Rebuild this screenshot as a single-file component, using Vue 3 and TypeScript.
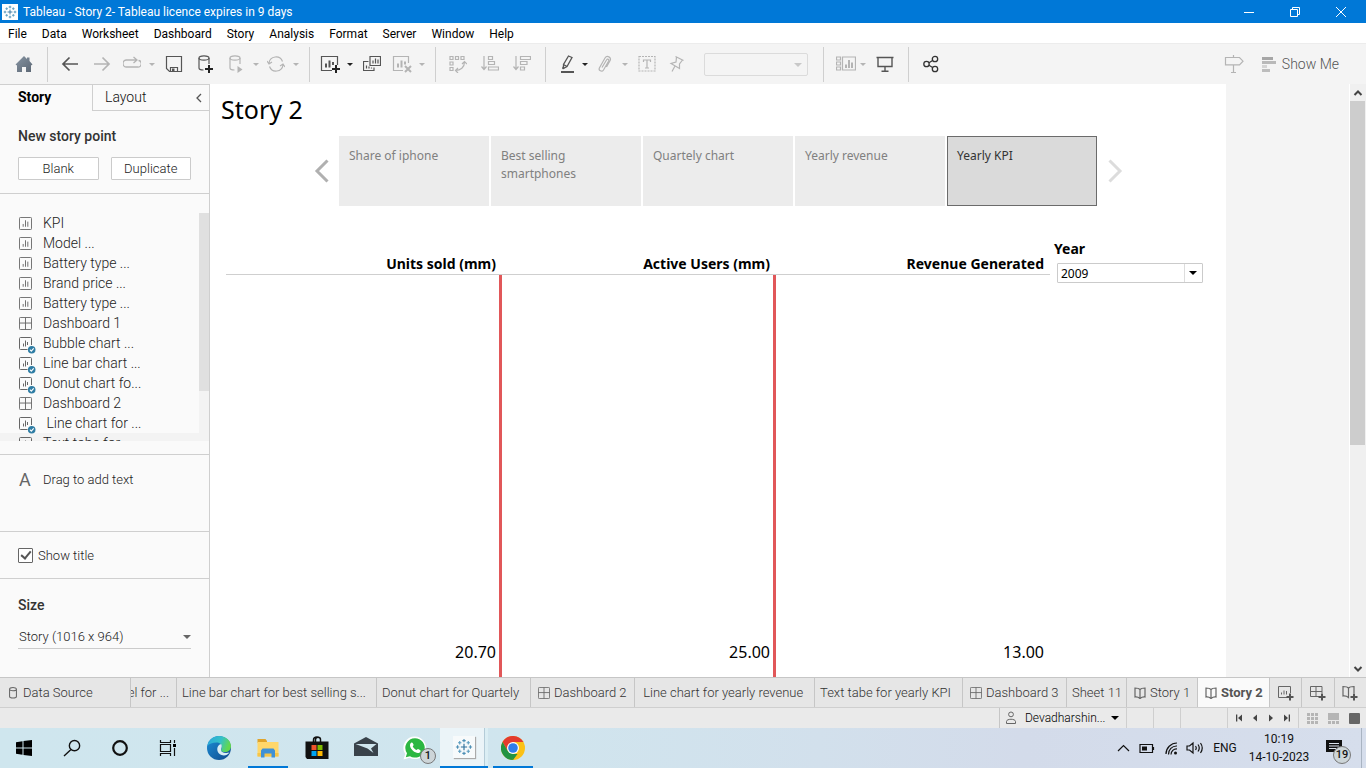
<script setup lang="ts">
import { ref } from 'vue'

interface SheetItem {
  icon: 'sheet' | 'dash' | 'used'
  label: string
}
interface Tab {
  icon?: string
  label: string
  width: number
  active?: boolean
  clipped?: boolean
}
interface Tool {
  icon: string
  name: string
  slot: 'wide' | 'mid' | 'slim'
  off?: boolean
  caret?: boolean
}

const menus = ['File', 'Data', 'Worksheet', 'Dashboard', 'Story', 'Analysis', 'Format', 'Server', 'Window', 'Help']

const toolGroups: Tool[][] = [
  [
    { icon: 'back', name: 'Undo', slot: 'wide' },
    { icon: 'forward', name: 'Redo', slot: 'wide', off: true },
    { icon: 'replay', name: 'Replay', slot: 'mid', off: true, caret: true },
    { icon: 'save', name: 'Save', slot: 'wide' },
    { icon: 'dbadd', name: 'New data source', slot: 'wide' },
    { icon: 'dbplay', name: 'Pause auto updates', slot: 'mid', off: true, caret: true },
    { icon: 'refresh', name: 'Run update', slot: 'mid', off: true, caret: true },
  ],
  [
    { icon: 'newsheet', name: 'New worksheet', slot: 'mid', caret: true },
    { icon: 'copysheet', name: 'Duplicate', slot: 'wide' },
    { icon: 'clearsheet', name: 'Clear sheet', slot: 'mid', off: true, caret: true },
  ],
  [
    { icon: 'swap', name: 'Swap rows and columns', slot: 'wide', off: true },
    { icon: 'sortasc', name: 'Sort ascending', slot: 'wide', off: true },
    { icon: 'sortdesc', name: 'Sort descending', slot: 'wide', off: true },
  ],
]
const markTools: Tool[] = [
  { icon: 'pen', name: 'Highlight', slot: 'slim', caret: true },
  { icon: 'clip', name: 'Group members', slot: 'mid', off: true, caret: true },
  { icon: 'text', name: 'Show mark labels', slot: 'wide', off: true },
  { icon: 'pin', name: 'Fix axes', slot: 'mid', off: true },
]
const viewTools: Tool[] = [
  { icon: 'cards', name: 'Show/hide cards', slot: 'slim', off: true, caret: true },
  { icon: 'present', name: 'Presentation mode', slot: 'wide' },
]

const sheets: SheetItem[] = [
  { icon: 'sheet', label: 'KPI' },
  { icon: 'sheet', label: 'Model ...' },
  { icon: 'sheet', label: 'Battery type ...' },
  { icon: 'sheet', label: 'Brand price ...' },
  { icon: 'sheet', label: 'Battery type ...' },
  { icon: 'dash', label: 'Dashboard 1' },
  { icon: 'used', label: 'Bubble chart ...' },
  { icon: 'used', label: 'Line bar chart ...' },
  { icon: 'used', label: 'Donut chart fo...' },
  { icon: 'dash', label: 'Dashboard 2' },
  { icon: 'used', label: '\u00a0Line chart for ...' },
  { icon: 'used', label: 'Text tabe for ...' },
]

const points = ['Share of iphone', 'Best selling smartphones', 'Quartely chart', 'Yearly revenue', 'Yearly KPI']
const current = ref(4)

const columns = [
  { title: 'Units sold (mm)', value: '20.70' },
  { title: 'Active Users (mm)', value: '25.00' },
  { title: 'Revenue Generated', value: '13.00' },
]

const tabs: Tab[] = [
  { icon: 'cyl', label: 'Data Source', width: 131 },
  { label: 'el for ...', width: 46, clipped: true },
  { label: 'Line bar chart for best selling s...', width: 200 },
  { label: 'Donut chart for Quartely', width: 154 },
  { icon: 'dash', label: 'Dashboard 2', width: 104 },
  { label: '\u00a0Line chart for yearly revenue', width: 180 },
  { label: 'Text tabe for yearly KPI', width: 148 },
  { icon: 'dash', label: 'Dashboard 3', width: 104 },
  { label: 'Sheet 11', width: 60 },
  { icon: 'book', label: 'Story 1', width: 71 },
  { icon: 'book', label: 'Story 2', width: 72, active: true },
]

const year = ref('2009')
const size = ref('Story (1016 x 964)')
const showTitle = ref(true)
</script>

<template>
  <svg class="defs" aria-hidden="true">
    <defs>
      <linearGradient id="edgeA" x1="0" y1="0" x2="1" y2="0.3">
        <stop offset="0" stop-color="#2aa5dc" /><stop offset="0.6" stop-color="#35c1c8" /><stop offset="1" stop-color="#62d84e" />
      </linearGradient>
      <linearGradient id="edgeB" x1="0" y1="0" x2="1" y2="1">
        <stop offset="0" stop-color="#1b8fd8" /><stop offset="1" stop-color="#114a8b" />
      </linearGradient>
      <linearGradient id="homeG" x1="0" y1="0" x2="1" y2="1">
        <stop offset="0" stop-color="#8795a3" /><stop offset="1" stop-color="#5b6673" />
      </linearGradient>
    </defs>
    <symbol id="i-logo" viewBox="0 0 16 16">
      <g fill="none" stroke-width="1">
        <path stroke="#2c6e9b" d="M8 5.2v5.6M5.2 8h5.6" />
        <path stroke="#4d8fb5" d="M8 0.8v3M6.5 2.3h3M8 12.2v3M6.5 13.7h3M0.8 8h3M2.3 6.500v3M12.2 8h3M13.700 6.500v3" />
        <path stroke="#5c9dc0" d="M4.200 2.700v3M2.700 4.200h3M11.800 2.700v3M10.300 4.200h3M4.200 10.300v3M2.700 11.800h3M11.800 10.300v3M10.300 11.800h3" />
      </g>
    </symbol>
    <symbol id="i-home" viewBox="0 0 18 18"><path fill="url(#homeG)" d="M9 1 0.500 9.500 2 10.500V17h5v-5h4v5h5v-6.500l1.500-1L14.500 6V2.500H12V4z" /></symbol>
    <symbol id="i-back" viewBox="0 0 18 18"><path fill="none" stroke="currentColor" stroke-width="1.700" d="M17 9H2M8.500 2.500 2 9l6.500 6.500" /></symbol>
    <symbol id="i-forward" viewBox="0 0 18 18"><path fill="none" stroke="currentColor" stroke-width="1.700" d="M1 9h15M9.500 2.500 16 9l-6.500 6.500" /></symbol>
    <symbol id="i-replay" viewBox="0 0 18 18"><path fill="none" stroke="currentColor" stroke-width="1.300" d="M8.500 5H3.500a3 3 0 0 0 0 7h11a3 3 0 0 0 1-6.500M5 5h8M10.500 2l3.500 3-3.500 3" /></symbol>
    <symbol id="i-save" viewBox="0 0 18 18"><path fill="none" stroke="currentColor" stroke-width="1.200" d="M1.500 1.500h15v15h-12l-3-3zM5.500 16.500v-4h7v4" /><path fill="currentColor" d="M7 13.500h2.500V17H7z" /></symbol>
    <symbol id="i-dbadd" viewBox="0 0 18 18">
      <path fill="none" stroke="currentColor" stroke-width="1.200" d="M2 3v10c0 1.200 2 2 4.500 2M12 3v6" /><ellipse cx="7" cy="3" rx="5" ry="2.200" fill="none" stroke="currentColor" stroke-width="1.200" />
      <path stroke="#222" stroke-width="2" d="M12 10v8M8 14h8" />
    </symbol>
    <symbol id="i-dbplay" viewBox="0 0 18 18">
      <path fill="none" stroke="currentColor" stroke-width="1.200" d="M3 3v10c0 1.200 2 2 4.500 2M13 3v6" /><ellipse cx="8" cy="3" rx="5" ry="2.200" fill="none" stroke="currentColor" stroke-width="1.200" />
      <path fill="currentColor" d="M10.500 11l5 3.500-5 3.500z" />
    </symbol>
    <symbol id="i-refresh" viewBox="0 0 18 18"><path fill="none" stroke="currentColor" stroke-width="1.200" d="M2 8a7 7 0 0 1 13.500-1.500M16 10a7 7 0 0 1-13.500 1.500M0 6l2 3 3-2M18 12l-2-3-3 2" /></symbol>
    <symbol id="i-newsheet" viewBox="0 0 20 18">
      <path fill="none" stroke="currentColor" stroke-width="1.200" d="M17.500 10V1.500h-16v14H12" />
      <path stroke="currentColor" stroke-width="2" d="M6 12.500v-4M9.500 12.500v-7M13 10v-3" /><path stroke="#222" stroke-width="2" d="M16 10v8M12 14h8" />
    </symbol>
    <symbol id="i-copysheet" viewBox="0 0 18 18">
      <path fill="none" stroke="currentColor" stroke-width="1.200" d="M7 1.500h10.500v9H7zM5.500 6.500h-5v9h10.500v-3" />
      <path stroke="currentColor" stroke-width="1.200" d="M10 8.500v-3M12.500 8.500v-5M15 8.500v-4M3.500 13.500v-3M6 13.500v-2M8.500 13.500v-1" />
    </symbol>
    <symbol id="i-clearsheet" viewBox="0 0 20 18">
      <path fill="none" stroke="currentColor" stroke-width="1.200" d="M16.500 8V1.500h-15v14H11" />
      <path stroke="currentColor" stroke-width="2" d="M6 12.500v-4M9.500 12.500v-7M13 9.500v-3M13 11l6 6M19 11l-6 6" />
    </symbol>
    <symbol id="i-swap" viewBox="0 0 18 18"><path fill="none" stroke="currentColor" stroke-width="1.200" d="M1 1.500h3v3H1zM6.500 1.500h3v3h-3zM12 1.500h3v3h-3zM1 7h3v3H1zM1 12.500h3v3H1zM6.500 15.500c5 0 9-3 9-8.500M13 9l2.500-2.500L18 9M9 13l-2.500 2.500L9 18" /></symbol>
    <symbol id="i-sortasc" viewBox="0 0 18 18"><path fill="none" stroke="currentColor" stroke-width="1.200" d="M3 1v13M0.500 11.500 3 14.500l2.500-3M7.500 1.500h4v3h-4zM7.500 6.500h6v3h-6zM7.500 12h10v3h-10z" /></symbol>
    <symbol id="i-sortdesc" viewBox="0 0 18 18"><path fill="none" stroke="currentColor" stroke-width="1.200" d="M3 1v13M0.500 11.500 3 14.500l2.500-3M7.500 1.500h10v3h-10zM7.500 6.500h6.500v3H7.500zM7.500 12h4v3h-4z" /></symbol>
    <symbol id="i-pen" viewBox="0 0 18 18"><path fill="none" stroke="currentColor" stroke-width="1.300" d="M9.500 1 13 2.500 8 11.500 4.500 13.500V9.500zM4.500 9.500 8 11.500" /><path fill="currentColor" d="M3.500 11.500 6 13l-3 1zM2 16h13v2H2z" /></symbol>
    <symbol id="i-clip" viewBox="0 0 18 18"><path fill="none" stroke="currentColor" stroke-width="1.200" d="M6 12.500 10.500 5c1-1.800 3-.7 2 1.200L7.500 15c-1.600 2.500-5.500.5-4-2.300L9 3c2-3.200 6.800-.8 5 2.800L10.500 12" /></symbol>
    <symbol id="i-text" viewBox="0 0 18 18"><path fill="none" stroke="currentColor" stroke-width="1.200" stroke-dasharray="2 1" d="M1 1.500h16v14.500H1z" /><path fill="none" stroke="currentColor" stroke-width="1.200" d="M5.500 7V5h7v2M9 5v8M7 13h4" /></symbol>
    <symbol id="i-pin" viewBox="0 0 18 18"><path fill="none" stroke="currentColor" stroke-width="1.200" d="M7.500 1.500 15.500 5.500M8.500 2 8 7 3 8.500 11.500 13.500 11.500 9 14.500 5M7 11 4 16.500" /></symbol>
    <symbol id="i-cards" viewBox="0 0 20 18"><path fill="none" stroke="currentColor" stroke-width="1.200" d="M.5 2h4v3h-4zM.5 7h4v3h-4zM.5 12h4v3h-4zM6.500 2h13v13h-13z" /><path stroke="currentColor" stroke-width="2" d="M10 13V9.500M13 13V5M16 13V7.500" /></symbol>
    <symbol id="i-present" viewBox="0 0 18 18"><path fill="none" stroke="currentColor" stroke-width="1.400" d="M0.500 2.500h17M2 2.500V11.500h14V2.500M9 11.500V16M5.500 16.300h7" /></symbol>
    <symbol id="i-share" viewBox="0 0 18 18"><g fill="none" stroke="currentColor" stroke-width="1.300"><circle cx="4.500" cy="9" r="2.700" /><circle cx="13" cy="4" r="2.700" /><circle cx="13" cy="14" r="2.700" /><path d="M7 7.700l3.600-2.200M7 10.300l3.600 2.200" /></g></symbol>
    <symbol id="i-sign" viewBox="0 0 20 18"><path fill="none" stroke="currentColor" stroke-width="1.200" d="M1.500 2.500h14l3.500 3.700-3.500 3.700h-14zM9.500 0v2.500M9.500 10v7.500M7 17.500h5" /></symbol>
    <symbol id="i-sheet" viewBox="0 0 14 14"><path fill="none" stroke="#666" d="M1.500.5h11a1 1 0 0 1 1 1v11a1 1 0 0 1-1 1h-11a1 1 0 0 1-1-1v-11a1 1 0 0 1 1-1zM4.500 10.500v-3M7 10.500V3.500M9.500 10.500V5" /></symbol>
    <symbol id="i-used" viewBox="0 0 17 17">
      <path fill="none" stroke="#666" d="M8.500 12.500h-7a1 1 0 0 1-1-1v-10a1 1 0 0 1 1-1h10a1 1 0 0 1 1 1v6.500M4.500 9.500v-3M6.500 9.500V3.500M8.500 8V5" />
      <circle cx="12.700" cy="12.700" r="3.800" fill="#2f7da4" /><path fill="none" stroke="#fff" stroke-width="1.100" d="M10.900 12.700l1.400 1.400 2.400-2.800" />
    </symbol>
    <symbol id="i-dash" viewBox="0 0 14 14"><path fill="none" stroke="#666" d="M1.500.5h11a1 1 0 0 1 1 1v11a1 1 0 0 1-1 1h-11a1 1 0 0 1-1-1v-11a1 1 0 0 1 1-1zM7 .5v13M.5 6.500h13" /></symbol>
    <symbol id="i-cyl" viewBox="0 0 14 14"><path fill="none" stroke="#666" stroke-width="1.200" d="M3 2.500v8.500c0 2.500 8 2.500 8 0V2.500c0-2.500-8-2.500-8 0 0 2.500 8 2.500 8 0" /></symbol>
    <symbol id="i-book" viewBox="0 0 12 12"><path fill="none" stroke="#666" stroke-width="1.200" d="M6 2.500v9C4.500 10.200 2.500 9.800 1 10V1c2 0 4 .3 5 1.500C7 1.300 9 1 11 1v9c-1.500-.2-3.500.2-5 1.500" /></symbol>
    <symbol id="i-tabsheet" viewBox="0 0 16 16"><path fill="none" stroke="#666" d="M9 12.500H.5V1.500h12V8M3.500 9.500v-2M6 9.500v-4M8.500 9.500V6" /><path stroke="#555" stroke-width="2" d="M12 8.500v7M8.500 12h7" /></symbol>
    <symbol id="i-tabdash" viewBox="0 0 16 16"><path fill="none" stroke="#666" d="M9 11.500H.5V1.500h11.500V8M6 1.500v10M.5 6.500H12" /><path stroke="#555" stroke-width="2" d="M12 8.500v7M8.500 12h7" /></symbol>
    <symbol id="i-tabbook" viewBox="0 0 16 16"><path fill="none" stroke="#666" stroke-width="1.200" d="M6.500 3v9.500C5 11.200 3 10.800 1 11V1.500c2 0 4.500.3 5.500 1.500C7.500 1.800 10 1.500 12 1.500V8" /><path stroke="#555" stroke-width="2" d="M12 8.500v7M8.500 12h7" /></symbol>
  </svg>

  <div class="screen">
    <header class="titlebar">
      <span class="applogo"><svg><use href="#i-logo" /></svg></span>
      <span class="apptitle">Tableau - Story 2- Tableau licence expires in 9 days</span>
      <button class="winbtn" aria-label="Minimize"><svg viewBox="0 0 12 12"><path d="M1 6.500h10" /></svg></button>
      <button class="winbtn" aria-label="Restore"><svg viewBox="0 0 12 12"><path d="M1.500 3.500h7v7h-7zM3.500 3.500v-2h7v7h-2" /></svg></button>
      <button class="winbtn" aria-label="Close"><svg viewBox="0 0 12 12"><path d="M1 1l10 10M11 1L1 11" /></svg></button>
    </header>

    <nav class="menubar">
      <button v-for="m in menus" :key="m">{{ m }}</button>
    </nav>

    <div class="toolbar">
      <button class="home" aria-label="Home"><svg><use href="#i-home" /></svg></button>
      <div v-for="(g, i) in toolGroups" :key="i" class="group">
        <template v-for="t in g" :key="t.icon">
          <button class="tool" :class="[t.slot, t.icon, { off: t.off }]" :aria-label="t.name"><svg><use :href="'#i-' + t.icon" /></svg></button>
          <button v-if="t.caret" class="caret" :class="{ off: t.off }" :aria-label="t.name + ' options'"></button>
        </template>
      </div>
      <div class="group marks">
        <template v-for="t in markTools" :key="t.icon">
          <button class="tool" :class="[t.slot, { off: t.off }]" :aria-label="t.name"><svg><use :href="'#i-' + t.icon" /></svg></button>
          <button v-if="t.caret" class="caret" :class="{ off: t.off }" :aria-label="t.name + ' options'"></button>
        </template>
        <div class="fit"><select aria-label="Fit" disabled></select></div>
      </div>
      <div class="group view">
        <template v-for="t in viewTools" :key="t.icon">
          <button class="tool" :class="[t.slot, t.icon, { off: t.off }]" :aria-label="t.name"><svg><use :href="'#i-' + t.icon" /></svg></button>
          <button v-if="t.caret" class="caret" :class="{ off: t.off }" :aria-label="t.name + ' options'"></button>
        </template>
      </div>
      <div class="group"><button class="tool wide share" aria-label="Share"><svg><use href="#i-share" /></svg></button></div>
      <button class="tool wide off guide" aria-label="Data guide"><svg><use href="#i-sign" /></svg></button>
      <button class="showme">
        <svg viewBox="0 0 14 16"><path fill="#a6a6a6" d="M0 1h11v3H0z" /><path fill="#b9b9b9" d="M0 5h14v3H0z" /><path fill="#d4d4d4" d="M0 9h5v3H0z" /><path fill="#bdbdbd" d="M0 13h8v3H0z" /></svg>
        Show Me
      </button>
    </div>

    <main class="work">
      <aside class="side">
        <div class="panes">
          <button class="pane on">Story</button>
          <button class="pane">Layout</button>
          <button class="collapse" aria-label="Collapse"><svg viewBox="0 0 8 10"><path d="M6 1 2 5l4 4" /></svg></button>
        </div>
        <section class="newpoint">
          <h2>New story point</h2>
          <div class="pair"><button>Blank</button><button>Duplicate</button></div>
        </section>
        <section class="sheets">
          <ul>
            <li v-for="(s, i) in sheets" :key="i"><svg :class="'mark-' + s.icon"><use :href="'#i-' + s.icon" /></svg><span>{{ s.label }}</span></li>
          </ul>
          <div class="track"><i></i></div>
        </section>
        <section class="addtext"><b>A</b><span>Drag to add text</span></section>
        <section class="showtitle">
          <label><input v-model="showTitle" type="checkbox" /><span>Show title</span></label>
        </section>
        <section class="size">
          <h2 id="size-h">Size</h2>
          <div class="sizebox"><select v-model="size" aria-labelledby="size-h"><option>Story (1016 x 964)</option></select></div>
        </section>
      </aside>

      <div class="canvas">
        <article class="story">
          <h1>Story 2</h1>
          <nav class="points">
            <button class="arrow" aria-label="Previous" @click="current = Math.max(0, current - 1)"><svg viewBox="0 0 16 26"><path d="M13.500 2.500 3 13l10.500 10.500" /></svg></button>
            <button v-for="(p, i) in points" :key="p" class="point" :class="{ on: i === current }" @click="current = i">{{ p }}</button>
            <button class="arrow next" aria-label="Next" @click="current = Math.min(4, current + 1)"><svg viewBox="0 0 16 26"><path d="M2.500 2.500 13 13 2.500 23.500" /></svg></button>
          </nav>
          <div class="board">
            <table>
              <thead><tr><th v-for="c in columns" :key="c.title">{{ c.title }}</th></tr></thead>
              <tbody><tr><td v-for="c in columns" :key="c.title">{{ c.value }}</td></tr></tbody>
            </table>
            <div class="filter">
              <label for="year">Year</label>
              <div class="yearbox"><select id="year" v-model="year"><option>2009</option></select></div>
            </div>
          </div>
        </article>
      </div>
      <div class="vscroll">
        <button aria-label="Scroll up"><svg viewBox="0 0 10 8"><path d="M1.500 6 5 2.500 8.500 6" /></svg></button>
        <i></i>
        <button class="down" aria-label="Scroll down"><svg viewBox="0 0 10 8"><path d="M1.500 2 5 5.500 8.500 2" /></svg></button>
      </div>
    </main>

    <nav class="tabs">
      <button v-for="t in tabs" :key="t.label" class="tab" :class="{ active: t.active, clipped: t.clipped, iconic: t.icon }" :style="{ width: t.width + 'px' }">
        <svg v-if="t.icon"><use :href="'#i-' + t.icon" /></svg><span>{{ t.label }}</span>
      </button>
      <button class="tab add" aria-label="New worksheet"><svg><use href="#i-tabsheet" /></svg></button>
      <button class="tab add" aria-label="New dashboard"><svg><use href="#i-tabdash" /></svg></button>
      <button class="tab add" aria-label="New story"><svg><use href="#i-tabbook" /></svg></button>
    </nav>

    <div class="status">
      <button class="user">
        <svg viewBox="0 0 12 14"><path d="M6 1a2.300 2.300 0 1 1 0 4.800A2.300 2.300 0 0 1 6 1zM1.500 12.500V10.500c0-3 9-3 9 0v2z" /></svg>
        <span>Devadharshin...</span><i></i>
      </button>
      <span class="cell"></span><span class="cell"></span><span class="cell last"></span>
      <div class="pager">
        <button aria-label="First"><svg viewBox="0 0 8 8"><path d="M1 .5h1.300v7H1zM7 .5v7L3 4z" /></svg></button>
        <button aria-label="Previous tab"><svg viewBox="0 0 8 8"><path d="M6 .5v7L2 4z" /></svg></button>
        <button aria-label="Next tab"><svg viewBox="0 0 8 8"><path d="M2 .5v7L6 4z" /></svg></button>
        <button aria-label="Last"><svg viewBox="0 0 8 8"><path d="M5.700 .5H7v7H5.700zM1 .5v7L5 4z" /></svg></button>
      </div>
      <div class="modes">
        <button aria-label="Show sheet sorter"><svg viewBox="0 0 11 11"><path fill="#b5b5b5" d="M0 0h3v3H0zM4 0h3v3H4zM8 0h3v3H8zM0 4h3v3H0zM4 4h3v3H4zM8 4h3v3H8zM0 8h3v3H0zM4 8h3v3H4zM8 8h3v3H8z" /></svg></button>
        <button aria-label="Show filmstrip"><svg viewBox="0 0 11 11"><path fill="#b5b5b5" d="M0 0h11v7H0zM0 8h3v3H0zM4 8h3v3H4zM8 8h3v3H8z" /></svg></button>
        <button aria-label="Show tabs"><svg viewBox="0 0 11 11"><rect width="11" height="11" rx="1" fill="#666" /></svg></button>
      </div>
    </div>

    <footer class="taskbar">
      <button class="sys" aria-label="Start"><svg viewBox="0 0 24 24"><path d="M4 6.200 10.500 5.300v6.200H4zM11.500 5.100 20 4v7.500h-8.500zM4 12.500h6.500v6.200L4 17.800zM11.500 12.500H20V20l-8.500-1.100z" /></svg></button>
      <button class="sys" aria-label="Search"><svg viewBox="0 0 24 24"><path fill="none" stroke="#111" stroke-width="1.400" d="M14.500 4.500a5 5 0 1 1 0 10.300 5 5 0 0 1 0-10.300zM11 13.500 4 20" /></svg></button>
      <button class="sys" aria-label="Cortana"><svg viewBox="0 0 24 24"><circle cx="12" cy="12" r="6.800" fill="none" stroke="#111" stroke-width="2.200" /></svg></button>
      <button class="sys" aria-label="Task view"><svg viewBox="0 0 24 24"><path fill="none" stroke="#111" stroke-width="1.200" d="M4.500 4v2.500h10V4M4.500 8.500h10v7h-10zM4.500 20v-2.500h10V20M18.500 4v3M18.500 12v8" /><path d="M17 8h3v3h-3z" /></svg></button>
      <button class="app first" aria-label="Edge"><svg viewBox="0 0 24 24"><circle cx="12" cy="12" r="12" fill="url(#edgeB)" /><path fill="url(#edgeA)" d="M.3 10C1.500 4 6.300 0 12 0c7.500 0 12 5.500 12 10 0 4-3 6-6 6-2.300 0-4-.8-4-1.800 0-.8 1-1.200 1-3C15 8.500 12.500 6.500 9.500 6.500 5.500 6.500 2 8 .3 10z" /><path fill="#d8edf4" d="M14.500 8.500c.8 2.800-.5 4-.5 5.700 0 1.800 3 3.500 8.500 2.300-2 2.600-5 3.500-8 2.500-4.500-1.500-5.500-7-2.500-10 .8-.8 1.800-1 2.500-.5z" /></svg></button>
      <button class="app open" aria-label="File Explorer"><svg viewBox="0 0 24 24"><path fill="#e0a42b" d="M1.500 3h8l1.500 2v2h-9.500z" /><path fill="#ffd76a" d="M1.500 6h21v14.500h-21z" /><path fill="#f6c548" d="M1.500 17h21v3.500h-21z" /><path fill="#3f91d6" d="M5 14.500l1.500-2h11l1.500 2v7h-3.500v-4h-7v4H5z" /></svg></button>
      <button class="app" aria-label="Store"><svg viewBox="0 0 24 24"><path fill="none" stroke="#111" stroke-width="1.500" d="M8.500 6V4c0-4 7-4 7 0v2M10.500 6V3.500c0-3 5-3 5 0" /><path fill="#111" d="M.5 5.500h23V23H2L.5 21z" /><path fill="#f0532a" d="M6.500 9h5v5h-5z" /><path fill="#7fba00" d="M12.500 9h5v5h-5z" /><path fill="#00a4ef" d="M6.500 15h5v5h-5z" /><path fill="#ffb900" d="M12.500 15h5v5h-5z" /></svg></button>
      <button class="app" aria-label="Mail"><svg viewBox="0 0 24 24"><path fill="#39424a" d="M0 7.500 12 1l12 6.500v12.500H0z" /><path fill="#d0e6ee" d="M1.500 8h21L17 12.500l2.500 4.500L13.500 12.500z" /></svg></button>
      <button class="app wa" aria-label="WhatsApp">
        <svg viewBox="0 0 24 24"><path fill="#fff" d="M12 .5A11.300 11.300 0 1 1 6.500 21.800L.5 23.500 2.200 18A11.400 11.400 0 0 1 12 .5z" /><path fill="#2cb742" d="M12 2.200A9.700 9.700 0 1 1 7 20.200L2.800 21.300 4 17.200A9.700 9.700 0 0 1 12 2.200z" /><path fill="#fff" d="M8.500 6.500c-3 2-1 6 1.500 8.300 2.500 2.200 6 3.400 7.500.7.600-1.200-.5-1.500-2-2.300-1.200-.6-1.300.9-2 .8-1.300-.3-3.300-2.200-3.700-3.500-.1-.5 1-1 .8-1.700-.6-1.500-.9-2.500-2.100-2.300z" /></svg>
        <span class="count">1</span>
      </button>
      <button class="app current" aria-label="Tableau"><span class="tile"><svg><use href="#i-logo" /></svg></span></button>
      <button class="app open chrome" aria-label="Chrome"><svg viewBox="0 0 24 24"><circle cx="12" cy="12" r="12" fill="#fbc116" /><path fill="#e33b2e" d="M1.600 6A12 12 0 0 1 22.400 6H12L6.800 15z" /><path fill="#229342" d="M1.600 6 6.800 15l3 3.500L12 24A12 12 0 0 1 1.600 6z" /><path fill="#229342" d="M6.800 15 12 18h4.500L12 24z" /><circle cx="12" cy="12" r="6" fill="#fff" /><circle cx="12" cy="12" r="4.800" fill="#2f7de9" /></svg></button>
      <div class="tray">
        <button aria-label="Hidden icons"><svg viewBox="0 0 16 16"><path d="M3 11l5.500-5.500L14 11" /></svg></button>
        <button aria-label="Battery"><svg viewBox="0 0 16 16"><path d="M1 4.500h12.500v8H1zM14.500 7v3" /><path class="solid" d="M3 6.500h5v4H3z" /></svg></button>
        <button aria-label="Network"><svg viewBox="0 0 16 16"><path d="M3 14A11 11 0 0 1 14 3M5.500 14.500A8 8 0 0 1 14 6M8 14.500A5.500 5.500 0 0 1 14 9" /><circle class="solid" cx="12.500" cy="13" r="1.500" /></svg></button>
        <button class="vol" aria-label="Volume"><svg viewBox="0 0 18 16"><path d="M1 6h2.500L7 3v10l-3.500-3H1zM9.500 6q1.500 2 0 4M12 4.500q2.500 3.500 0 7M14.500 3q3.500 5 0 10" /></svg></button>
        <button class="lang">ENG</button>
        <button class="clock"><span>10:19</span><span>14-10-2023</span></button>
        <button class="note" aria-label="Notifications"><svg viewBox="0 0 18 18"><path class="solid" d="M1 1h16v12h-4l-3 3v-3H1z" /><path stroke="#dbe2ec" d="M4 4.500h10M4 7h10M4 9.500h7" /></svg><span class="count">19</span></button>
        <button class="desk" aria-label="Show desktop"></button>
      </div>
    </footer>
  </div>
</template>

<style>
html,
body {
  margin: 0;
  height: 100%;
  overflow: hidden;
}
</style>

<style scoped>
* {
  box-sizing: border-box;
}
button,
select {
  font: inherit;
  color: inherit;
  background: none;
  border: 0;
  padding: 0;
  margin: 0;
  border-radius: 0;
}
select {
  appearance: none;
}
svg {
  display: block;
  flex: none;
}
.defs {
  position: absolute;
  width: 0;
  height: 0;
}
.screen {
  display: flex;
  flex-direction: column;
  height: 100vh;
  overflow: hidden;
  font-family: Roboto, 'Open Sans', sans-serif;
  font-size: 13px;
  font-weight: 300;
  color: #222;
  background: #fff;
}

/* window chrome */
.titlebar {
  display: flex;
  align-items: center;
  flex: none;
  height: 23px;
  background: #0078d7;
  color: #fff;
  font-size: 12px;
  font-weight: 400;
}
.applogo {
  margin-left: 2px;
  padding: 1px;
  background: #fff;
}
.applogo svg {
  width: 14px;
  height: 14px;
}
.apptitle {
  flex: 1;
  margin-left: 5px;
}
.winbtn {
  display: grid;
  place-items: center;
  width: 46px;
  height: 100%;
}
.winbtn:last-child {
  margin-right: 2px;
}
.winbtn svg {
  width: 12px;
  height: 12px;
  fill: none;
  stroke: #fff;
}
.menubar {
  display: flex;
  flex: none;
  height: 20px;
  padding: 1px 0 0 8px;
  gap: 15px;
  font-size: 12px;
  font-weight: 400;
  line-height: 20px;
  color: #000;
}

/* toolbar */
.toolbar {
  display: flex;
  align-items: center;
  flex: none;
  height: 41px;
  border-top: 1px solid #ececec;
  background: #f4f4f4;
}
.home {
  display: grid;
  place-items: center;
  width: 47px;
}
.home svg {
  width: 18px;
  height: 18px;
}
.group {
  display: flex;
  align-items: center;
  height: 35px;
  padding: 0 7px 0 6px;
  border-left: 1px solid #cfcfcf;
}
.group.marks {
  padding: 0 15px 0 11px;
}
.group.view {
  padding-left: 11px;
}
.tool {
  display: grid;
  place-items: center;
  color: #555;
}
.tool svg {
  width: 18px;
  height: 18px;
}
.newsheet svg,
.clearsheet svg,
.cards svg,
.guide svg {
  width: 20px;
}
.wide {
  width: 32px;
}
.mid {
  width: 28px;
}
.slim {
  width: 22px;
}
.off {
  color: #b4b4b4;
}
.share {
  color: #333;
}
.caret {
  display: grid;
  place-items: center;
  width: 12px;
  height: 20px;
}
.caret::before {
  content: '';
  border: 3px solid transparent;
  border-top: 3px solid currentColor;
  border-bottom: 0;
}
.fit {
  position: relative;
  margin-left: 13px;
}
.fit select {
  display: block;
  width: 104px;
  height: 23px;
  border: 1px solid #d0d0d0;
  border-radius: 2px;
}
.fit::after {
  content: '';
  position: absolute;
  right: 6px;
  top: 10px;
  border: 4px solid transparent;
  border-top-color: #c8c8c8;
  border-bottom: 0;
}
.guide {
  margin-left: auto;
}
.showme {
  display: flex;
  align-items: center;
  gap: 6px;
  margin: 0 27px 0 12px;
  font-size: 14px;
  color: #555;
}
.showme svg {
  width: 14px;
  height: 16px;
}

/* side pane */
.work {
  display: flex;
  flex: 1;
  min-height: 0;
}
.side {
  display: flex;
  flex-direction: column;
  width: 210px;
  flex: none;
  border-top: 1px solid #cfcfcf;
  border-right: 1px solid #cfcfcf;
  background: #fafafa;
}
.panes {
  display: flex;
  flex: none;
  height: 26px;
  font-size: 14px;
  line-height: 24px;
  color: #111;
}
.pane {
  border: solid #cfcfcf;
  border-width: 0 0 1px 1px;
  padding: 0 12px 1px;
  text-align: left;
}
.pane.on {
  width: 92px;
  padding: 0 0 2px 18px;
  border: 0;
  font-weight: 700;
  color: #000;
}
.collapse {
  flex: 1;
  display: flex;
  align-items: center;
  justify-content: flex-end;
  padding-right: 6px;
  border-bottom: 1px solid #cfcfcf;
}
.collapse svg {
  width: 8px;
  height: 10px;
  fill: none;
  stroke: #555;
  stroke-width: 1.3;
}
.side section {
  flex: none;
  border-bottom: 1px solid #cfcfcf;
}
h2 {
  margin: 0;
  font-size: 14px;
  line-height: 18px;
  font-weight: 500;
  color: #333;
}
.newpoint {
  padding: 16px 18px 13px;
}
.pair {
  display: grid;
  grid-template-columns: 1fr 1fr;
  gap: 12px;
  margin-top: 12px;
}
.pair button {
  height: 23px;
  border: 1px solid #cbcbcb;
  border-radius: 1px;
  background: #fff;
}
.side .sheets {
  flex: 1;
  display: flex;
  min-height: 0;
  padding: 19px 0 13px;
}
ul {
  flex: 1;
  margin: 0;
  padding: 0;
  list-style: none;
  overflow: hidden;
}
li {
  display: flex;
  align-items: center;
  height: 20px;
  padding-left: 19px;
  font-size: 14px;
}
li:last-child {
  background: #f3f3f3;
}
li svg {
  width: 13px;
  height: 13px;
}
li svg.mark-used {
  width: 17px;
  height: 17px;
  margin: 4px -4px 0 0;
}
li span {
  margin-left: 11px;
}
.track {
  width: 10px;
  background: #f3f3f3;
}
.track i {
  display: block;
  height: 78%;
  background: #e0e0e0;
}
.addtext {
  display: flex;
  align-items: center;
  height: 77px;
  padding: 0 19px 27px;
}
.addtext b {
  width: 24px;
  font-size: 18px;
  font-weight: 400;
  color: #666;
}
.showtitle {
  display: flex;
  align-items: center;
  height: 47px;
  padding-left: 18px;
}
.showtitle label {
  display: flex;
  align-items: center;
  gap: 5px;
}
.showtitle input {
  appearance: none;
  display: grid;
  place-items: center;
  width: 15px;
  height: 15px;
  margin: 0;
  border: 1px solid #666;
  border-radius: 1px;
  background: #fff;
}
.showtitle input:checked::before {
  content: '';
  width: 4px;
  height: 8px;
  margin-bottom: 2px;
  border: solid #555;
  border-width: 0 2px 2px 0;
  transform: rotate(40deg);
}
.side .size {
  height: 98px;
  padding: 17px 18px 0;
  border: 0;
}
.sizebox {
  position: relative;
  margin-top: 10px;
}
.sizebox select {
  display: block;
  width: 100%;
  height: 25px;
  padding-left: 1px;
  border-bottom: 1px solid #cbcbcb;
}
.sizebox::after {
  content: '';
  position: absolute;
  right: 0;
  top: 11px;
  border: 4px solid transparent;
  border-top-color: #666;
  border-bottom: 0;
}

/* story canvas */
.canvas {
  flex: 1;
  overflow: hidden;
  background: #f4f4f4;
}
.story {
  width: 1016px;
  height: 964px;
  background: #fff;
  color: #000;
  font-family: 'Noto Sans', sans-serif;
  font-weight: 400;
}
h1 {
  margin: 0;
  padding: 0 0 2px 11px;
  font-size: 25px;
  line-height: 50px;
  font-weight: 400;
}
.points {
  display: flex;
  justify-content: center;
  align-items: center;
  gap: 2px;
}
.point {
  display: flex;
  width: 150px;
  height: 70px;
  padding: 11px 10px;
  text-align: left;
  font-size: 12px;
  line-height: 18px;
  color: #808080;
  background: #ececec;
}
.point.on {
  padding: 10px 9px;
  border: 1px solid #6b6b6b;
  background: #dadada;
  color: #333;
}
.arrow {
  width: 26px;
}
.arrow svg {
  width: 16px;
  height: 26px;
  margin-left: 3px;
  fill: none;
  stroke: #b0b0b0;
  stroke-width: 3;
}
.arrow.next svg {
  margin-left: 8px;
  stroke: #dcdcdc;
}
.board {
  display: flex;
  align-items: flex-start;
  padding: 34px 23px 0 16px;
}
table {
  width: 824px;
  margin-top: 11px;
  border-collapse: separate;
  border-spacing: 0;
  table-layout: fixed;
}
th,
td {
  padding: 0 6px 0 0;
  text-align: right;
  font-size: 16px;
}
th {
  padding-top: 3px;
  border-bottom: 1px solid #cfcfcf;
  font-size: 14px;
  line-height: 20px;
}
th:first-child {
  width: 276px;
}
td {
  height: 754px;
  vertical-align: middle;
}
td:not(:last-child) {
  padding-right: 3px;
  border-right: 3px solid #e15759;
}
.filter {
  flex: 1;
  padding: 0 0 0 4px;
}
.filter label {
  display: block;
  font-size: 14px;
  line-height: 18px;
  font-weight: 700;
}
.yearbox {
  position: relative;
  margin: 5px 0 0 3px;
}
.yearbox select {
  display: block;
  width: 100%;
  height: 20px;
  padding-left: 3px;
  border: 1px solid #cbcbcb;
  border-radius: 1px;
  font-size: 12px;
}
.yearbox::after {
  content: '';
  position: absolute;
  right: 6px;
  top: 8px;
  border: 4px solid transparent;
  border-top-color: #000;
  border-bottom: 0;
}
.yearbox::before {
  content: '';
  position: absolute;
  right: 18px;
  top: 1px;
  bottom: 1px;
  width: 1px;
  background: #ddd;
}
.vscroll {
  display: flex;
  flex-direction: column;
  flex: none;
  width: 17px;
  border-left: 1px solid #fff;
  background: #f0f0f0;
}
.vscroll button {
  display: grid;
  place-items: center;
  height: 17px;
}
.vscroll svg {
  width: 10px;
  height: 8px;
  fill: none;
  stroke: #444;
  stroke-width: 2;
}
.vscroll i {
  height: 58%;
  margin-right: 1px;
  background: #cdcdcd;
}
.vscroll .down {
  margin-top: auto;
}

/* sheet tabs */
.tabs {
  display: flex;
  flex: none;
  height: 31px;
  border-top: 1px solid #c6c6c6;
  border-bottom: 1px solid #cfcfcf;
  background: #e6e6e6;
  color: #333;
}
.tab {
  display: flex;
  align-items: center;
  flex: none;
  padding-left: 5px;
  border-right: 1px solid #c6c6c6;
  white-space: nowrap;
  overflow: hidden;
}
.tab svg {
  width: 12px;
  height: 12px;
  margin-right: 4px;
}
.tab.iconic {
  padding-left: 7px;
}
.tab.clipped {
  padding: 0 7px 0 0;
  justify-content: flex-end;
}
.tab.active {
  background: #fafafa;
  font-weight: 700;
  color: #555;
}
.tab.add {
  flex: 1;
  padding: 0;
  justify-content: center;
}
.tab.add svg {
  width: 16px;
  height: 16px;
  margin: 0;
}
.tab.add:last-child {
  border: 0;
}

/* status bar */
.status {
  display: flex;
  justify-content: flex-end;
  flex: none;
  height: 20px;
  background: #eaeaea;
}
.user {
  display: flex;
  align-items: center;
  width: 127px;
  padding-left: 5px;
  border-left: 1px solid #c6c6c6;
  font-size: 12px;
  color: #000;
}
.user svg {
  width: 12px;
  height: 14px;
  margin-right: 8px;
  fill: none;
  stroke: #666;
}
.user i {
  margin-left: 6px;
  border: 4px solid transparent;
  border-top-color: #000;
  border-bottom: 0;
}
.cell {
  width: 27px;
  border-left: 1px solid #cfcfcf;
}
.cell.last {
  width: 47px;
}
.pager {
  display: flex;
  align-items: center;
  justify-content: space-between;
  width: 71px;
  padding: 0 7px;
  border-left: 1px solid #cfcfcf;
}
.pager svg {
  width: 8px;
  height: 8px;
  fill: #444;
}
.modes {
  display: flex;
  align-items: center;
  gap: 10px;
  padding: 0 6px 0 8px;
  border-left: 1px solid #cfcfcf;
}
.modes svg {
  width: 11px;
  height: 11px;
}

/* taskbar */
.taskbar {
  display: flex;
  flex: none;
  height: 40px;
  background: linear-gradient(90deg, #cfe6ee, #d0e5ee 40%, #d2e0ec 60%, #d3dbea 75%, #d6deec);
  font-size: 12px;
  font-weight: 400;
  color: #111;
}
.taskbar svg {
  width: 24px;
  height: 24px;
}
.sys {
  display: grid;
  place-items: center;
  width: 48px;
}
.app {
  position: relative;
  display: grid;
  place-items: center;
  width: 49px;
}
.app.first {
  width: 48px;
  margin-left: 3px;
}
.app.wa {
  width: 50px;
}
.app.open::after {
  content: '';
  position: absolute;
  left: 5px;
  right: 4px;
  bottom: 0;
  height: 2px;
  background: #0078d7;
}
.app.current {
  width: 48px;
  border-bottom: 2px solid #0078d7;
  background: linear-gradient(270deg, #dbeef4 3px, #b4ccd8 3px, #b4ccd8 4px, #ebf4f8 4px);
}
.tile {
  padding: 2px;
  background: #f7fafb;
  box-shadow: 1px 1px 1px #aaa;
}
.tile svg {
  width: 18px;
  height: 18px;
}
.count {
  position: absolute;
  right: 4px;
  bottom: 4px;
  width: 16px;
  height: 16px;
  border: 1px solid #777;
  border-radius: 8px;
  background: #cdd5d8;
  font-size: 11px;
  line-height: 14px;
  font-weight: 500;
  text-align: center;
}
.tray {
  display: flex;
  margin-left: auto;
}
.tray button {
  display: grid;
  place-items: center;
  width: 24px;
}
.tray svg {
  width: 16px;
  height: 16px;
  fill: none;
  stroke: #111;
  stroke-width: 1.2;
}
.tray .solid {
  fill: #111;
  stroke: none;
}
.tray .vol svg {
  width: 18px;
}
.tray .lang {
  width: 36px;
}
.tray .clock {
  display: flex;
  flex-direction: column;
  align-items: center;
  justify-content: center;
  width: 72px;
  line-height: 18px;
}
.tray .note {
  position: relative;
  width: 38px;
  margin-right: 8px;
}
.tray .note svg {
  width: 18px;
  height: 18px;
}
.tray .desk {
  width: 5px;
  border-left: 1px solid #a9b4c2;
}
.note .count {
  right: 2px;
  width: 18px;
  height: 18px;
  border-radius: 9px;
  line-height: 16px;
}
</style>
